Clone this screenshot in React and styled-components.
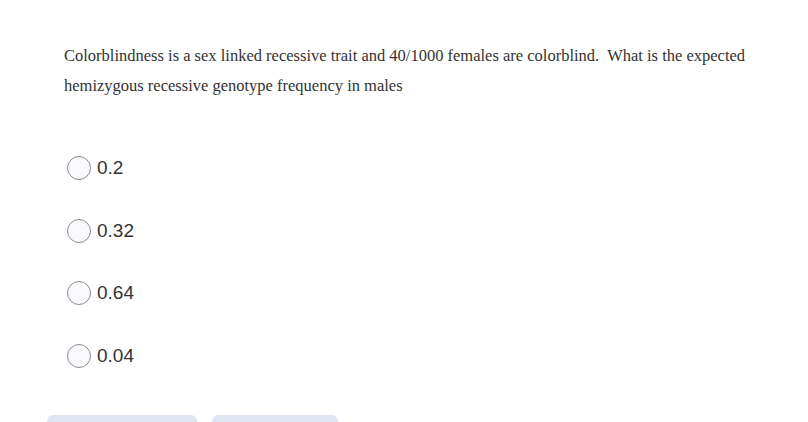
import React from "react";
import styled, { createGlobalStyle } from "styled-components";

const Global = createGlobalStyle`
  html, body { margin: 0; padding: 0; background: #ffffff; }
  body { width: 808px; height: 422px; overflow: hidden; }
`;

const Page = styled.div`
  width: 808px;
  height: 422px;
  box-sizing: border-box;
  padding: 41px 0 0 64px;
  display: flex;
  flex-direction: column;
  position: relative;
  overflow: hidden;
`;

const Question = styled.p`
  margin: 0;
  width: 700px;
  font-family: "Liberation Serif", "Times New Roman", serif;
  font-size: 16.5px;
  line-height: 30px;
  color: #333333;
`;

const Options = styled.div`
  display: flex;
  flex-direction: column;
  gap: 38.7px;
  margin-top: 55px;
  margin-left: 3px;
`;

const Option = styled.label`
  display: flex;
  align-items: center;
  gap: 6px;
  height: 24px;
  font-family: "Helvetica Neue", "Liberation Sans", Arial, sans-serif;
  font-size: 19px;
  color: #333333;
`;

const Radio = styled.span`
  width: 22px;
  height: 22px;
  border-radius: 50%;
  border: 1px solid #8c8c8c;
  background: #f7f9fd;
  flex: none;
`;

const Buttons = styled.div`
  display: flex;
  gap: 15px;
  margin-top: auto;
  margin-left: -17px;
  height: 7px;
`;

const Button = styled.div`
  width: ${(p) => p.w}px;
  height: 30px;
  border-radius: 6px;
  background: #e1e7f1;
`;

const options = ["0.2", "0.32", "0.64", "0.04"];

export default function App() {
  return (
    <>
      <Global />
      <Page>
        <Question>
          Colorblindness is a sex linked recessive trait and 40/1000 females are colorblind.&nbsp; What is the expected hemizygous recessive genotype frequency in males
        </Question>
        <Options>
          {options.map((o) => (
            <Option key={o}>
              <Radio />
              {o}
            </Option>
          ))}
        </Options>
        <Buttons>
          <Button w={150} />
          <Button w={126} />
        </Buttons>
      </Page>
    </>
  );
}
